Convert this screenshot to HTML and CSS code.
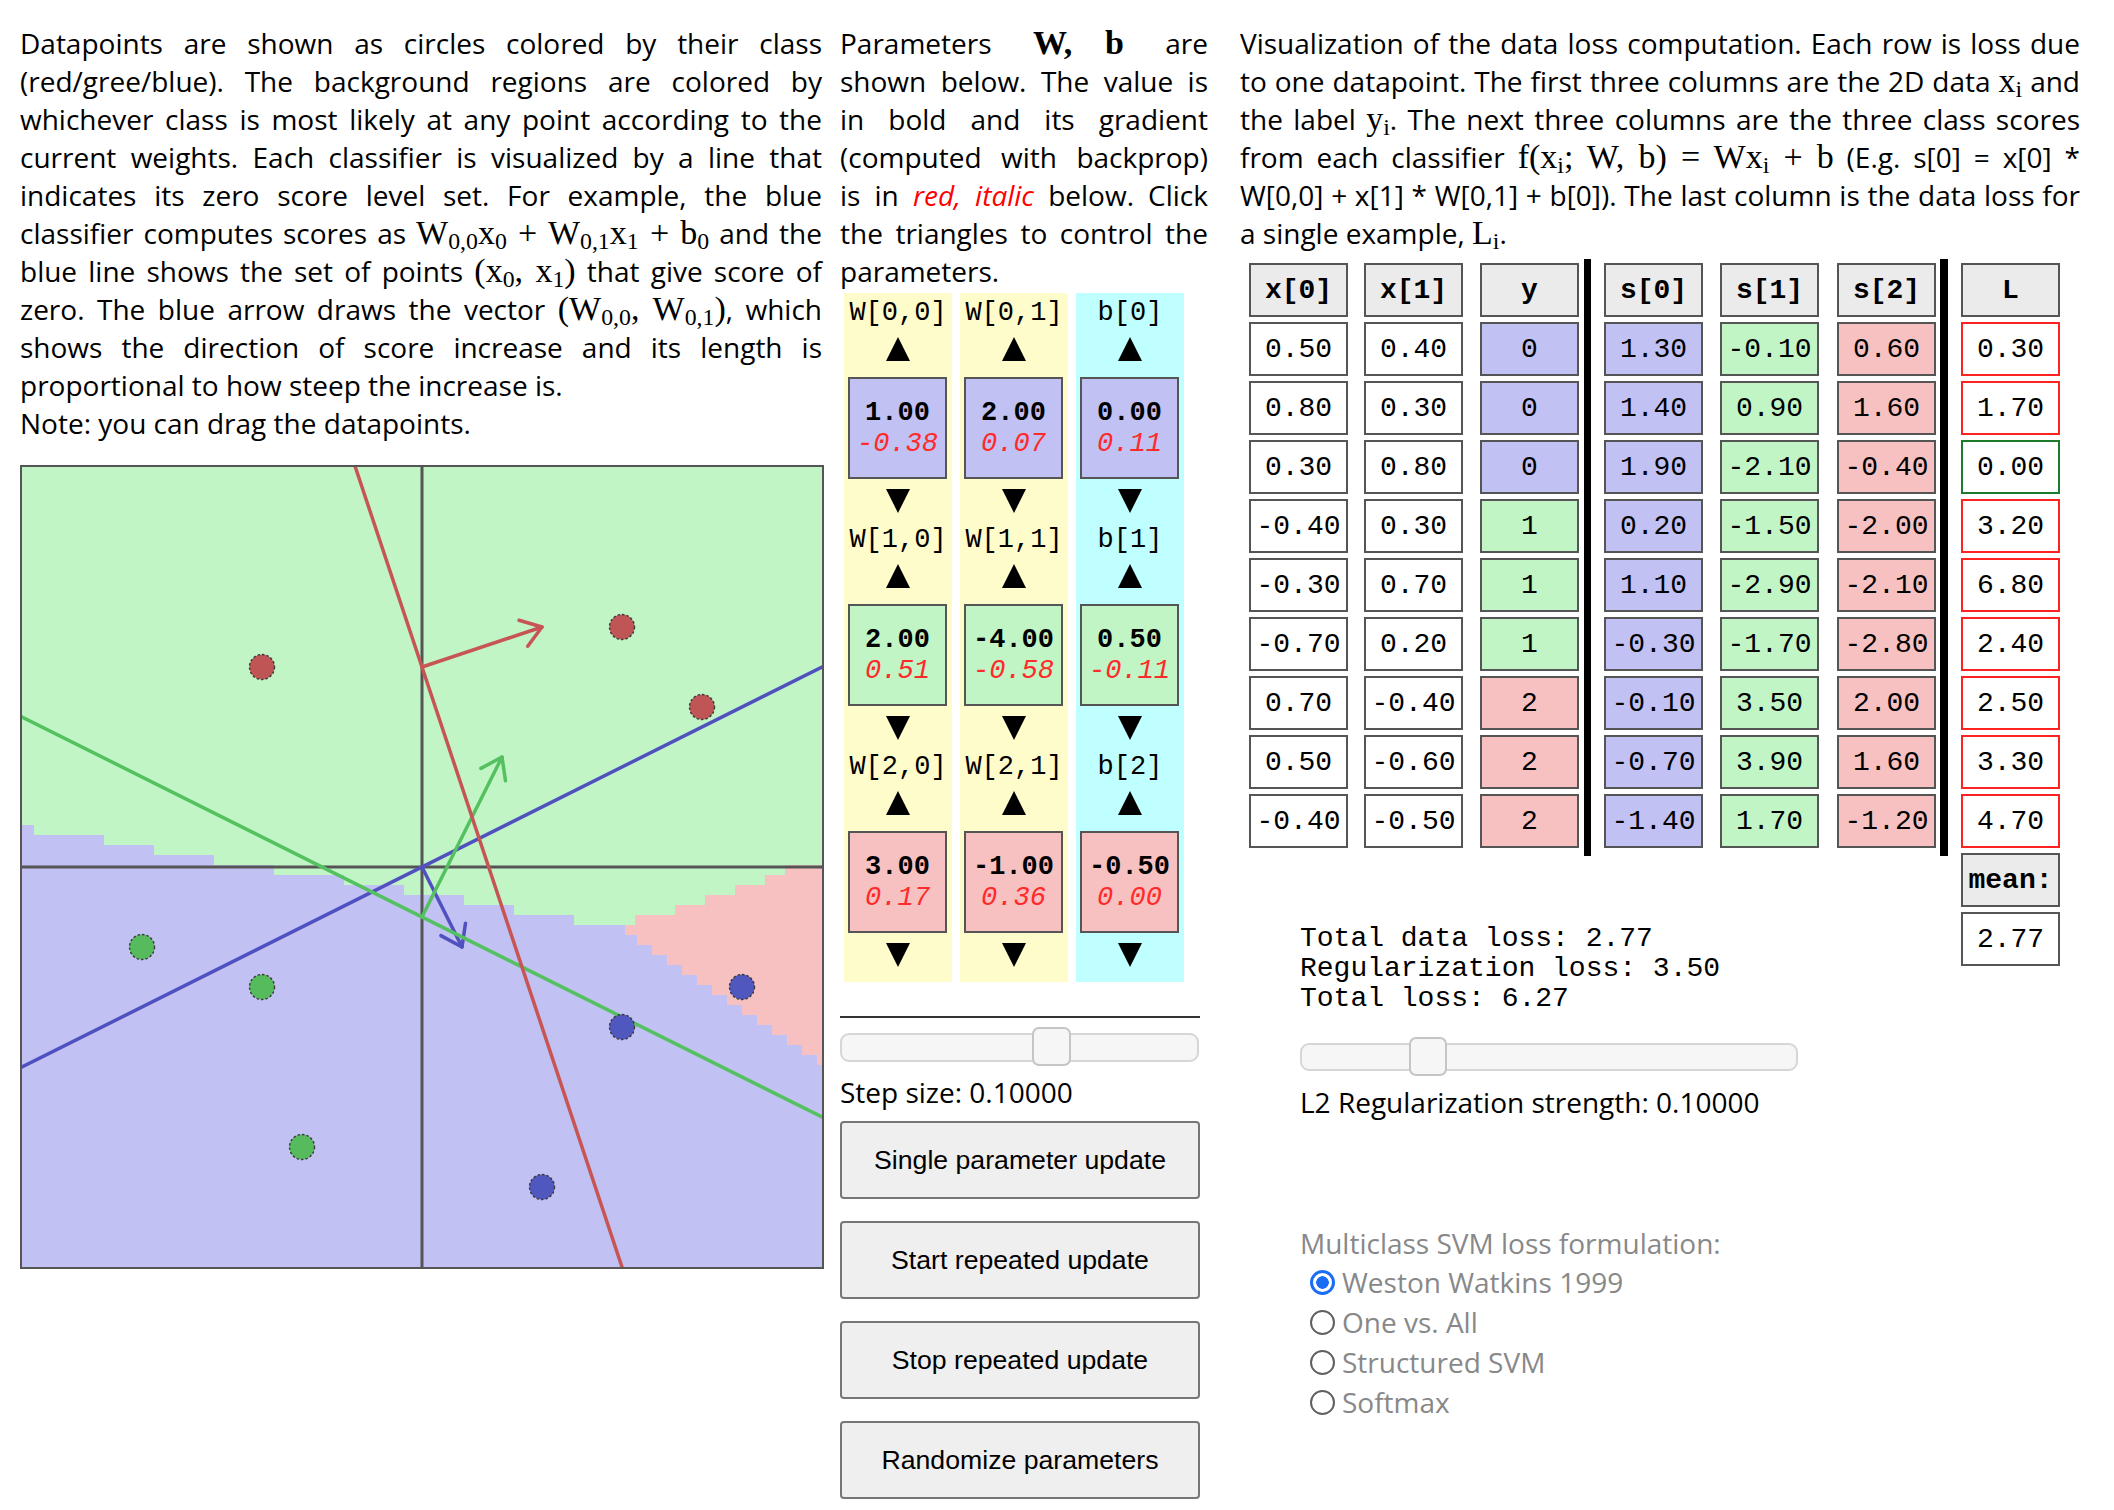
FILE: index.html
```html
<!DOCTYPE html>
<html>
<head>
<meta charset="utf-8">
<title>Linear classifier loss visualization</title>
<link rel="stylesheet" href="styles.css">
</head>
<body>
<div class="page">
  <div class="col col-viz">
    <p class="text">Datapoints are shown as circles colored by their class (red/gree/blue). The background regions are colored by whichever class is most likely at any point according to the current weights. Each classifier is visualized by a line that indicates its zero score level set. For example, the blue classifier computes scores as <span class="m">W<sub>0,0</sub>x<sub>0</sub> + W<sub>0,1</sub>x<sub>1</sub> + b<sub>0</sub></span> and the blue line shows the set of points <span class="m">(x<sub>0</sub>, x<sub>1</sub>)</span> that give score of zero. The blue arrow draws the vector <span class="m">(W<sub>0,0</sub>, W<sub>0,1</sub>)</span>, which shows the direction of score increase and its length is proportional to how steep the increase is.<br>Note: you can drag the datapoints.</p>
    <svg class="canvas" width="800" height="800" viewBox="0 0 800 800">
      <rect x="0" y="0" width="800" height="800" fill="#c1f5c6"/>
      <polygon shape-rendering="crispEdges" fill="#c1c1f3" points="0,358 12,358 12,368 82,368 82,378 132,378 132,388 192,388 192,398 252,398 252,408 322,408 322,418 382,418 382,428 442,428 442,438 492,438 492,448 552,448 552,458 613,458 613,448 653,448 653,438 683,438 683,428 713,428 713,418 743,418 743,408 763,408 763,398 800,398 800,800 0,800"/>
      <polygon shape-rendering="crispEdges" fill="#f7c1c1" points="603,458 613,458 613,448 653,448 653,438 683,438 683,428 713,428 713,418 743,418 743,408 763,408 763,398 800,398 800,598 795,598 795,588 780,588 780,578 765,578 765,568 750,568 750,558 735,558 735,548 720,548 720,538 705,538 705,528 690,528 690,518 675,518 675,508 660,508 660,498 645,498 645,488 630,488 630,478 615,478 615,468 603,468"/>
      <g stroke="#555" stroke-width="3">
        <line x1="0" y1="400" x2="800" y2="400"/>
        <line x1="400" y1="0" x2="400" y2="800"/>
      </g>
      <g stroke-width="3.5" fill="none" stroke-linecap="round" stroke-linejoin="round">
        <g stroke="#5050c0">
          <line x1="0" y1="600" x2="800" y2="200"/>
          <polyline points="400,400 440,480"/>
          <polyline points="443.5,456.3 440,480 418.9,468.6"/>
        </g>
        <g stroke="#55c060">
          <line x1="0" y1="250" x2="800" y2="650"/>
          <polyline points="400,450 480,290"/>
          <polyline points="458.9,301.4 480,290 483.5,313.7"/>
        </g>
        <g stroke="#c85555">
          <line x1="333.3" y1="0" x2="600" y2="800"/>
          <polyline points="400,200 520,160"/>
          <polyline points="497,153.2 520,160 505.7,179.3"/>
        </g>
      </g>
      <g stroke="#3a3a3a" stroke-width="1.4" stroke-dasharray="2.5 2">
        <circle cx="600" cy="560" r="12.5" fill="#5058c0"/>
        <circle cx="720" cy="520" r="12.5" fill="#5058c0"/>
        <circle cx="520" cy="720" r="12.5" fill="#5058c0"/>
        <circle cx="240" cy="520" r="12.5" fill="#55bb5c"/>
        <circle cx="280" cy="680" r="12.5" fill="#55bb5c"/>
        <circle cx="120" cy="480" r="12.5" fill="#55bb5c"/>
        <circle cx="680" cy="240" r="12.5" fill="#c05555"/>
        <circle cx="600" cy="160" r="12.5" fill="#c05555"/>
        <circle cx="240" cy="200" r="12.5" fill="#c05555"/>
      </g>
    </svg>
  </div>

  <div class="col col-params">
    <p class="text">Parameters <span class="m mb">W, b</span> are shown below. The value is in bold and its gradient (computed with backprop) is in <span class="red-it">red, italic</span> below. Click the triangles to control the parameters.</p>
    <div class="params">
      <div class="pcol pcol-w">
        <div class="pblock">
          <div class="plabel">W[0,0]</div>
          <div class="tri-row up"><svg class="tri" viewBox="0 0 24 24"><polygon points="12,0 24,24 0,24"/></svg></div>
          <div class="pbox c0"><div class="pval">1.00</div><div class="pgrad">-0.38</div></div>
          <div class="tri-row down"><svg class="tri" viewBox="0 0 24 24"><polygon points="0,0 24,0 12,24"/></svg></div>
        </div>
        <div class="pblock">
          <div class="plabel">W[1,0]</div>
          <div class="tri-row up"><svg class="tri" viewBox="0 0 24 24"><polygon points="12,0 24,24 0,24"/></svg></div>
          <div class="pbox c1"><div class="pval">2.00</div><div class="pgrad">0.51</div></div>
          <div class="tri-row down"><svg class="tri" viewBox="0 0 24 24"><polygon points="0,0 24,0 12,24"/></svg></div>
        </div>
        <div class="pblock">
          <div class="plabel">W[2,0]</div>
          <div class="tri-row up"><svg class="tri" viewBox="0 0 24 24"><polygon points="12,0 24,24 0,24"/></svg></div>
          <div class="pbox c2"><div class="pval">3.00</div><div class="pgrad">0.17</div></div>
          <div class="tri-row down"><svg class="tri" viewBox="0 0 24 24"><polygon points="0,0 24,0 12,24"/></svg></div>
        </div>
      </div>
      <div class="pcol pcol-w">
        <div class="pblock">
          <div class="plabel">W[0,1]</div>
          <div class="tri-row up"><svg class="tri" viewBox="0 0 24 24"><polygon points="12,0 24,24 0,24"/></svg></div>
          <div class="pbox c0"><div class="pval">2.00</div><div class="pgrad">0.07</div></div>
          <div class="tri-row down"><svg class="tri" viewBox="0 0 24 24"><polygon points="0,0 24,0 12,24"/></svg></div>
        </div>
        <div class="pblock">
          <div class="plabel">W[1,1]</div>
          <div class="tri-row up"><svg class="tri" viewBox="0 0 24 24"><polygon points="12,0 24,24 0,24"/></svg></div>
          <div class="pbox c1"><div class="pval">-4.00</div><div class="pgrad">-0.58</div></div>
          <div class="tri-row down"><svg class="tri" viewBox="0 0 24 24"><polygon points="0,0 24,0 12,24"/></svg></div>
        </div>
        <div class="pblock">
          <div class="plabel">W[2,1]</div>
          <div class="tri-row up"><svg class="tri" viewBox="0 0 24 24"><polygon points="12,0 24,24 0,24"/></svg></div>
          <div class="pbox c2"><div class="pval">-1.00</div><div class="pgrad">0.36</div></div>
          <div class="tri-row down"><svg class="tri" viewBox="0 0 24 24"><polygon points="0,0 24,0 12,24"/></svg></div>
        </div>
      </div>
      <div class="pcol pcol-b">
        <div class="pblock">
          <div class="plabel">b[0]</div>
          <div class="tri-row up"><svg class="tri" viewBox="0 0 24 24"><polygon points="12,0 24,24 0,24"/></svg></div>
          <div class="pbox c0"><div class="pval">0.00</div><div class="pgrad">0.11</div></div>
          <div class="tri-row down"><svg class="tri" viewBox="0 0 24 24"><polygon points="0,0 24,0 12,24"/></svg></div>
        </div>
        <div class="pblock">
          <div class="plabel">b[1]</div>
          <div class="tri-row up"><svg class="tri" viewBox="0 0 24 24"><polygon points="12,0 24,24 0,24"/></svg></div>
          <div class="pbox c1"><div class="pval">0.50</div><div class="pgrad">-0.11</div></div>
          <div class="tri-row down"><svg class="tri" viewBox="0 0 24 24"><polygon points="0,0 24,0 12,24"/></svg></div>
        </div>
        <div class="pblock">
          <div class="plabel">b[2]</div>
          <div class="tri-row up"><svg class="tri" viewBox="0 0 24 24"><polygon points="12,0 24,24 0,24"/></svg></div>
          <div class="pbox c2"><div class="pval">-0.50</div><div class="pgrad">0.00</div></div>
          <div class="tri-row down"><svg class="tri" viewBox="0 0 24 24"><polygon points="0,0 24,0 12,24"/></svg></div>
        </div>
      </div>
    </div>
    <div class="divider"></div>
    <div class="slider step-slider"><div class="thumb"></div></div>
    <div class="slabel">Step size: 0.10000</div>
    <button class="btn btn-first">Single parameter update</button>
    <button class="btn">Start repeated update</button>
    <button class="btn">Stop repeated update</button>
    <button class="btn">Randomize parameters</button>
  </div>

  <div class="col col-loss">
    <p class="text">Visualization of the data loss computation. Each row is loss due to one datapoint. The first three columns are the 2D data <span class="m">x<sub>i</sub></span> and the label <span class="m">y<sub>i</sub></span>. The next three columns are the three class scores from each classifier <span class="m">f(x<sub>i</sub>; W, b) = Wx<sub>i</sub> + b</span> (E.g. s[0] = x[0] * W[0,0] + x[1] * W[0,1] + b[0]). The last column is the data loss for a single example, <span class="m">L<sub>i</sub></span>.</p>
    <div class="tbl">
      <div class="bar bar1"></div>
      <div class="bar bar2"></div>
      <div class="cell hd mean-hd">mean:</div>
      <div class="cell mean-val">2.77</div>
      <pre class="losses">Total data loss: 2.77
Regularization loss: 3.50
Total loss: 6.27</pre>

      <div class="cell hd">x[0]</div><div class="cell hd">x[1]</div><div class="cell hd">y</div>
      <div class="cell hd">s[0]</div><div class="cell hd">s[1]</div><div class="cell hd">s[2]</div><div class="cell hd">L</div>

      <div class="cell">0.50</div><div class="cell">0.40</div><div class="cell c0">0</div>
      <div class="cell c0">1.30</div><div class="cell c1">-0.10</div><div class="cell c2">0.60</div><div class="cell lc">0.30</div>

      <div class="cell">0.80</div><div class="cell">0.30</div><div class="cell c0">0</div>
      <div class="cell c0">1.40</div><div class="cell c1">0.90</div><div class="cell c2">1.60</div><div class="cell lc">1.70</div>

      <div class="cell">0.30</div><div class="cell">0.80</div><div class="cell c0">0</div>
      <div class="cell c0">1.90</div><div class="cell c1">-2.10</div><div class="cell c2">-0.40</div><div class="cell lc lc-ok">0.00</div>

      <div class="cell">-0.40</div><div class="cell">0.30</div><div class="cell c1">1</div>
      <div class="cell c0">0.20</div><div class="cell c1">-1.50</div><div class="cell c2">-2.00</div><div class="cell lc">3.20</div>

      <div class="cell">-0.30</div><div class="cell">0.70</div><div class="cell c1">1</div>
      <div class="cell c0">1.10</div><div class="cell c1">-2.90</div><div class="cell c2">-2.10</div><div class="cell lc">6.80</div>

      <div class="cell">-0.70</div><div class="cell">0.20</div><div class="cell c1">1</div>
      <div class="cell c0">-0.30</div><div class="cell c1">-1.70</div><div class="cell c2">-2.80</div><div class="cell lc">2.40</div>

      <div class="cell">0.70</div><div class="cell">-0.40</div><div class="cell c2">2</div>
      <div class="cell c0">-0.10</div><div class="cell c1">3.50</div><div class="cell c2">2.00</div><div class="cell lc">2.50</div>

      <div class="cell">0.50</div><div class="cell">-0.60</div><div class="cell c2">2</div>
      <div class="cell c0">-0.70</div><div class="cell c1">3.90</div><div class="cell c2">1.60</div><div class="cell lc">3.30</div>

      <div class="cell">-0.40</div><div class="cell">-0.50</div><div class="cell c2">2</div>
      <div class="cell c0">-1.40</div><div class="cell c1">1.70</div><div class="cell c2">-1.20</div><div class="cell lc">4.70</div>
    </div>
    <div class="slider reg-slider"><div class="thumb"></div></div>
    <div class="rlabel">L2 Regularization strength: 0.10000</div>
    <div class="mc-title">Multiclass SVM loss formulation:</div>
    <label class="radio-row"><input type="radio" name="loss" checked>Weston Watkins 1999</label>
    <label class="radio-row"><input type="radio" name="loss">One vs. All</label>
    <label class="radio-row"><input type="radio" name="loss">Structured SVM</label>
    <label class="radio-row"><input type="radio" name="loss">Softmax</label>
  </div>
</div>
</body>
</html>
```

FILE: styles.css
```css
html, body {
  margin: 0;
  padding: 0;
  background: #ffffff;
}

body {
  font-family: "Open Sans", "Noto Sans", sans-serif;
  font-size: 28px;
  color: #000;
}

.page {
  display: flex;
  align-items: flex-start;
  padding: 24px 0 0 20px;
}

.col-viz {
  width: 804px;
  margin-right: 16px;
}

.col-params {
  width: 370px;
  margin-right: 30px;
}

.col-loss {
  width: 840px;
}

.text {
  margin: 0;
  line-height: 38px;
  text-align: justify;
}

.col-viz .text {
  margin-right: 2px;
}

.col-params .text {
  width: 368px;
}

.m {
  font-family: "Liberation Serif", "Times New Roman", serif;
  font-size: 34px;
  line-height: 0;
}

.m sub {
  font-size: 0.7em;
  line-height: 0;
  vertical-align: -0.2em;
}

.mb {
  font-weight: bold;
  margin: 0 10px;
}

.red-it {
  color: #ff0000;
  font-style: italic;
}

/* canvas */
.canvas {
  display: block;
  border: 2px solid #555;
  margin-top: 23px;
}

/* parameters */
.params {
  display: flex;
  gap: 8px;
  margin: 3px 0 0 4px;
}

.pcol {
  width: 108px;
  padding-bottom: 8px;
}

.pcol-w {
  background: #fffccc;
}

.pcol-b {
  background: #c0ffff;
}

.plabel {
  height: 40px;
  line-height: 40px;
  text-align: center;
  font-family: "Liberation Mono", "Courier New", monospace;
  font-size: 27px;
}

.tri-row {
  display: flex;
  justify-content: center;
  box-sizing: border-box;
}

.tri-row.up {
  height: 44px;
  padding-top: 4px;
}

.tri-row.down {
  height: 41px;
  padding-top: 10px;
}

.tri {
  display: block;
  width: 24px;
  height: 24px;
  fill: #000;
}

.pbox {
  width: 99px;
  height: 102px;
  box-sizing: border-box;
  border: 2px solid #555;
  margin-left: 4px;
  padding-top: 19px;
  text-align: center;
  font-family: "Liberation Mono", "Courier New", monospace;
  font-size: 27px;
  line-height: 31px;
}

.pval {
  font-weight: bold;
}

.pgrad {
  font-style: italic;
  color: #ff2a2a;
}

.c0 { background: #c1c1f3; }
.c1 { background: #c1f5c6; }
.c2 { background: #f7c1c1; }

.divider {
  width: 360px;
  height: 2px;
  background: #333;
  margin-top: 34px;
}

/* sliders */
.slider {
  position: relative;
  box-sizing: border-box;
  border: 2px solid #d6d6d6;
  border-radius: 9px;
  background: #f6f6f6;
}

.thumb {
  position: absolute;
  box-sizing: border-box;
  border: 2px solid #c5c5c5;
  border-radius: 7px;
  background: #f6f6f6;
}

.step-slider {
  width: 359px;
  height: 29px;
  margin-top: 15px;
}

.step-slider .thumb {
  left: 190px;
  top: -8px;
  width: 39px;
  height: 39px;
}

.slabel {
  margin-top: 11px;
  line-height: 38px;
}

.btn {
  display: block;
  width: 360px;
  height: 78px;
  margin: 22px 0 0 0;
  padding: 0;
  box-sizing: border-box;
  border: 2px solid #767676;
  border-radius: 4px;
  background: #efefef;
  color: #000;
  font-family: "Liberation Sans", Arial, sans-serif;
  font-size: 26.67px;
}

.btn-first {
  margin-top: 10px;
}

/* loss table */
.tbl {
  display: grid;
  grid-template-columns: 115px 116px 104px 20px 116px 117px 103px 21px 99px;
  grid-template-rows: repeat(12, 54px);
  row-gap: 5px;
  margin: 11px 0 0 9px;
}

.cell {
  width: 99px;
  height: 54px;
  box-sizing: border-box;
  border: 2px solid #555;
  display: flex;
  align-items: center;
  justify-content: center;
  font-family: "Liberation Mono", "Courier New", monospace;
  font-size: 28px;
  background-color: #fff;
}

.cell.c0 { background: #c1c1f3; }
.cell.c1 { background: #c1f5c6; }
.cell.c2 { background: #f7c1c1; }

.hd {
  font-weight: bold;
}

.cell.hd { background: #ebebeb; }

.lc {
  border-color: #ff2222;
}

.lc.lc-ok {
  border-color: #1b7a2b;
}

.bar {
  background: #000;
  grid-row: 1 / 11;
  margin: -4px 0 -8px 0;
}

.bar1 {
  grid-column: 4;
  width: 7px;
}

.bar2 {
  grid-column: 8;
  width: 8px;
}

.mean-hd {
  grid-column: 9;
  grid-row: 11;
}

.mean-val {
  grid-column: 9;
  grid-row: 12;
}

.losses {
  grid-column: 1 / 8;
  grid-row: 11 / 13;
  align-self: start;
  margin: 71px 0 0 51px;
  font-family: "Liberation Mono", "Courier New", monospace;
  font-size: 28px;
  line-height: 30px;
}

.reg-slider {
  width: 498px;
  height: 28px;
  margin: 77px 0 0 60px;
}

.reg-slider .thumb {
  left: 107px;
  top: -8px;
  width: 38px;
  height: 39px;
}

.rlabel {
  margin: 12px 0 0 60px;
  line-height: 38px;
}

.mc-title {
  margin: 103px 0 0 60px;
  line-height: 38px;
  color: #888;
}

.radio-row {
  display: flex;
  align-items: center;
  height: 40px;
  margin-left: 70px;
  color: #888;
}

.radio-row input {
  appearance: none;
  -webkit-appearance: none;
  box-sizing: border-box;
  width: 25px;
  height: 25px;
  margin: 0 7px 0 0;
  border: 2px solid #606060;
  border-radius: 50%;
  background: #fff;
}

.radio-row input:checked {
  border: 3px solid #1a6ef5;
  background: radial-gradient(circle, #1a6ef5 0 6px, #fff 6.5px);
}
```
